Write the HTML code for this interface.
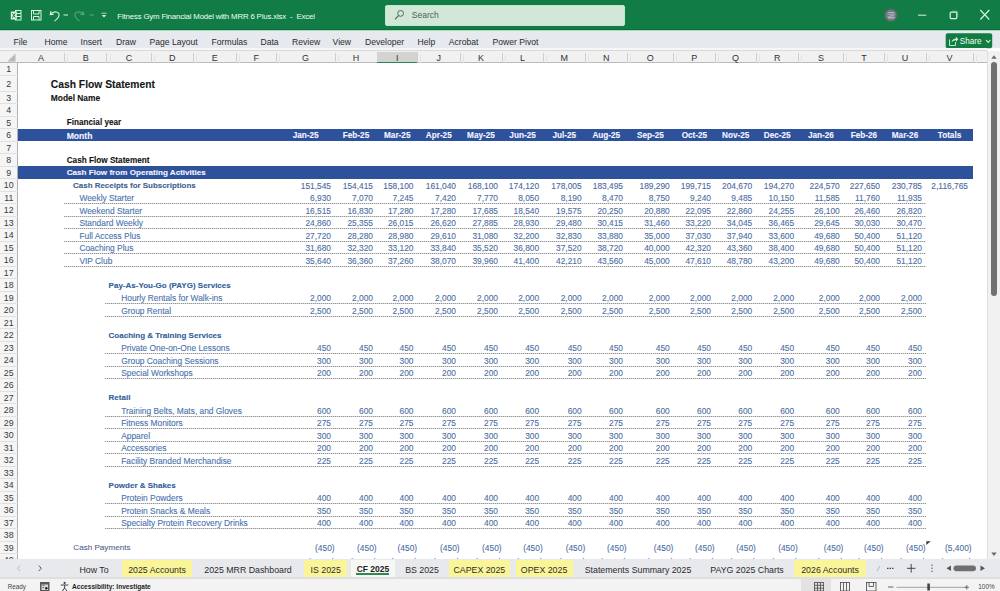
<!DOCTYPE html><html><head><meta charset="utf-8"><style>
*{margin:0;padding:0;box-sizing:border-box}
html,body{width:1000px;height:591px;overflow:hidden;background:#fff;font-family:"Liberation Sans",sans-serif}
.a{position:absolute;white-space:pre}
svg{position:absolute;overflow:visible}
#title{position:absolute;left:0;top:0;width:1000px;height:30px;background:#117c46}
#ribbon{position:absolute;left:0;top:30px;width:1000px;height:18.3px;background:#e6e9ed;border-top:1px solid #a8dcb8}
#colhdr{position:absolute;left:0;top:48.3px;width:987px;height:15px;background:#f1f1f1;border-bottom:1px solid #bababa;border-top:2.2px solid #f6f6f6}
#colhdr:after{content:'';position:absolute;left:0;top:0;width:100%;height:1px;background:#dadada}
#rowhdr{position:absolute;left:0;top:62.9px;width:17.8px;height:497px;background:#f5f5f5;border-right:1px solid #b0b0b0}
.rt{font-size:8.6px;color:#2b2b2b;}
.ch{font-size:9px;color:#333;text-align:center;line-height:12px;top:51.5px}
.rn{font-size:8.8px;color:#3a3a3a;text-align:center;width:17.5px;left:0}
.cell{font-size:8.4px;-webkit-text-stroke:0.1px currentColor}
.b{font-weight:bold}
.num{text-align:right}
.band{position:absolute;left:17.5px;width:955.5px;background:#2e519c}
.dot{position:absolute;height:1.2px;background:repeating-linear-gradient(90deg,#959595 0 1px,#d6d6d6 1px 2px)}
#tabs{position:absolute;left:0;top:559px;width:1000px;height:18.5px;background:#e8e9ec}
#status{position:absolute;left:0;top:577.3px;width:1000px;height:13.7px;background:#f3f3f3;border-top:2px solid #dfdfdf}
.tab{position:absolute;top:559.5px;height:17.5px;line-height:21px;font-size:8.8px;color:#2b2b2b;text-align:center}
.y{background:#fbf59a}
</style></head><body>
<div id="title"></div>
<div class="a" style="left:0;top:28.8px;width:1000px;height:1.2px;background:#0d6a3a"></div>
<svg style="left:0;top:0" width="1000" height="30" viewBox="0 0 1000 30">
<g fill="none" stroke="#d9f5e1" stroke-width="1">
<rect x="15.5" y="10.5" width="5.5" height="9.5"/>
<line x1="15.5" y1="13.5" x2="21" y2="13.5"/><line x1="15.5" y1="16.5" x2="21" y2="16.5"/>
</g>
<rect x="10.8" y="11.5" width="6" height="8" fill="#d9f5e1"/>
<path d="M12.3 13.2 L15.3 17.8 M15.3 13.2 L12.3 17.8" stroke="#117c46" stroke-width="1"/>
<g fill="none" stroke="#d9f5e1" stroke-width="1">
<rect x="31.5" y="10.5" width="9.5" height="9.5"/>
<path d="M33.5 10.5 V14 H39 V10.5 M33.5 20 V16.5 H39 V20"/>
</g>
<path d="M51 11 L50.2 14.6 L53.8 14.2" fill="none" stroke="#d9f5e1" stroke-width="1.1"/>
<path d="M50.5 14.3 C54 10.5 59.5 11.5 59 15.5 C58.8 17.5 56.5 19.5 54.5 21.2" fill="none" stroke="#d9f5e1" stroke-width="1.1"/>
<line x1="63.5" y1="15" x2="68" y2="15" stroke="#d9f5e1" stroke-width="1"/>
<g opacity="0.35">
<path d="M83 11 L83.8 14.6 L80.2 14.2" fill="none" stroke="#d9f5e1" stroke-width="1.1"/>
<path d="M83.5 14.3 C80 10.5 74.5 11.5 75 15.5 C75.2 17.5 77.5 19.5 79.5 21.2" fill="none" stroke="#d9f5e1" stroke-width="1.1"/>
<line x1="89.5" y1="15" x2="94" y2="15" stroke="#d9f5e1" stroke-width="1"/>
</g>
<line x1="101.5" y1="13.2" x2="106.5" y2="13.2" stroke="#d9f5e1" stroke-width="0.8"/>
<path d="M101.8 15 L106.2 15 L104 17.5 Z" fill="#d9f5e1"/>
<rect x="385.5" y="5.5" width="239" height="20" rx="1.5" fill="#d3e7d9" stroke="#b9edc8" stroke-width="1"/>
<circle cx="400.6" cy="13.4" r="2.9" fill="none" stroke="#4c6b57" stroke-width="1"/>
<line x1="398.5" y1="15.6" x2="395" y2="19.4" stroke="#4c6b57" stroke-width="1.1"/>
<circle cx="890.9" cy="15.2" r="6.4" fill="#6f7a80" stroke="#3f6d52" stroke-width="1.4"/><rect x="887.6" y="12" width="7" height="6.5" rx="1" fill="#aeb3bb"/>
<line x1="918" y1="15.2" x2="926.3" y2="15.2" stroke="#d9f5e1" stroke-width="1"/>
<rect x="950.2" y="12.2" width="6.6" height="6.4" rx="1" fill="none" stroke="#d9f5e1" stroke-width="1.2"/>
<path d="M952.2 11.2 H957.8 V16.8" fill="none" stroke="#d9f5e1" stroke-width="0.6" opacity="0.5"/>
<path d="M980.3 10 L989.3 19.5 M989.3 10 L980.3 19.5" stroke="#d9f5e1" stroke-width="1.1"/>
</svg>
<div class="a" style="left:887.2px;top:11.2px;font-size:5.5px;line-height:8px;color:#5d6670">RS</div>
<div class="a" style="left:117.3px;top:11.6px;font-size:7.8px;letter-spacing:-0.15px;color:#f0fff4;line-height:10px">Fitness Gym Financial Model with MRR 6 Plus.xlsx  -  Excel</div>
<div class="a" style="left:411.8px;top:10px;font-size:8.5px;color:#4d5e53;line-height:10px">Search</div>
<div id="ribbon"></div>
<div class="a rt" style="left:13.5px;top:37.4px;line-height:11px">File</div>
<div class="a rt" style="left:44.6px;top:37.4px;line-height:11px">Home</div>
<div class="a rt" style="left:80.5px;top:37.4px;line-height:11px">Insert</div>
<div class="a rt" style="left:116px;top:37.4px;line-height:11px">Draw</div>
<div class="a rt" style="left:149.5px;top:37.4px;line-height:11px">Page Layout</div>
<div class="a rt" style="left:211.6px;top:37.4px;line-height:11px">Formulas</div>
<div class="a rt" style="left:260.5px;top:37.4px;line-height:11px">Data</div>
<div class="a rt" style="left:292px;top:37.4px;line-height:11px">Review</div>
<div class="a rt" style="left:332.6px;top:37.4px;line-height:11px">View</div>
<div class="a rt" style="left:365px;top:37.4px;line-height:11px">Developer</div>
<div class="a rt" style="left:417.6px;top:37.4px;line-height:11px">Help</div>
<div class="a rt" style="left:448.8px;top:37.4px;line-height:11px">Acrobat</div>
<div class="a rt" style="left:492.6px;top:37.4px;line-height:11px">Power Pivot</div>
<svg style="left:0;top:0" width="1000" height="52" viewBox="0 0 1000 52">
<rect x="945.7" y="33.3" width="46.5" height="15" rx="2" fill="#137c42"/>
<path d="M949.5 39.5 V45.5 H955.5 V42" fill="none" stroke="#c9f3d6" stroke-width="0.9"/>
<path d="M951.5 42.5 C952 39.5 954 38.5 956 38.5 V36.8 L958.3 39.3 L956 41.8 V40.2 C954.5 40.2 952.8 41 951.5 42.5 Z" fill="#c9f3d6"/>
<path d="M986 40 L988.2 42.4 L990.4 40" fill="none" stroke="#d9f7e2" stroke-width="1.1"/>
</svg>
<div class="a" style="left:959.8px;top:35.6px;font-size:8.2px;color:#f0fff4;line-height:11px">Share</div>
<div id="colhdr"></div>
<svg style="left:0;top:0" width="20" height="64" viewBox="0 0 20 64"><path d="M15.5 53.5 V61.5 H7.5 Z" fill="#b9b9b9"/></svg>
<div class="a ch" style="left:17.5px;width:46.900000000000006px">A</div>
<div class="a" style="left:63.900000000000006px;top:53px;width:1px;height:9.9px;background:#cfcfcf"></div>
<div class="a" style="left:67.10000000000001px;top:55px;width:1px;height:7.9px;background:#e2e2e2"></div>
<div class="a ch" style="left:64.4px;width:42.5px">B</div>
<div class="a" style="left:106.4px;top:53px;width:1px;height:9.9px;background:#cfcfcf"></div>
<div class="a" style="left:109.60000000000001px;top:55px;width:1px;height:7.9px;background:#e2e2e2"></div>
<div class="a ch" style="left:106.9px;width:44.349999999999994px">C</div>
<div class="a" style="left:150.75px;top:53px;width:1px;height:9.9px;background:#cfcfcf"></div>
<div class="a" style="left:153.95px;top:55px;width:1px;height:7.9px;background:#e2e2e2"></div>
<div class="a ch" style="left:151.25px;width:41.849999999999994px">D</div>
<div class="a" style="left:192.6px;top:53px;width:1px;height:9.9px;background:#cfcfcf"></div>
<div class="a" style="left:195.79999999999998px;top:55px;width:1px;height:7.9px;background:#e2e2e2"></div>
<div class="a ch" style="left:193.1px;width:43.150000000000006px">E</div>
<div class="a" style="left:235.75px;top:53px;width:1px;height:9.9px;background:#cfcfcf"></div>
<div class="a" style="left:238.95px;top:55px;width:1px;height:7.9px;background:#e2e2e2"></div>
<div class="a ch" style="left:236.25px;width:40.0px">F</div>
<div class="a" style="left:275.75px;top:53px;width:1px;height:9.9px;background:#cfcfcf"></div>
<div class="a" style="left:278.95px;top:55px;width:1px;height:7.9px;background:#e2e2e2"></div>
<div class="a ch" style="left:276.25px;width:58.75px">G</div>
<div class="a" style="left:334.5px;top:53px;width:1px;height:9.9px;background:#cfcfcf"></div>
<div class="a" style="left:337.7px;top:55px;width:1px;height:7.9px;background:#e2e2e2"></div>
<div class="a ch" style="left:335px;width:42px">H</div>
<div class="a" style="left:376.5px;top:53px;width:1px;height:9.9px;background:#cfcfcf"></div>
<div class="a" style="left:379.7px;top:55px;width:1px;height:7.9px;background:#e2e2e2"></div>
<div class="a" style="left:377px;top:51.5px;width:40.5px;height:11.8px;background:#d3d3d3;border-bottom:1.2px solid #2f8352"></div>
<div class="a ch" style="left:377px;width:40.5px">I</div>
<div class="a" style="left:417.0px;top:53px;width:1px;height:9.9px;background:#cfcfcf"></div>
<div class="a" style="left:420.2px;top:55px;width:1px;height:7.9px;background:#e2e2e2"></div>
<div class="a ch" style="left:417.5px;width:42.5px">J</div>
<div class="a" style="left:459.5px;top:53px;width:1px;height:9.9px;background:#cfcfcf"></div>
<div class="a" style="left:462.7px;top:55px;width:1px;height:7.9px;background:#e2e2e2"></div>
<div class="a ch" style="left:460px;width:42px">K</div>
<div class="a" style="left:501.5px;top:53px;width:1px;height:9.9px;background:#cfcfcf"></div>
<div class="a" style="left:504.7px;top:55px;width:1px;height:7.9px;background:#e2e2e2"></div>
<div class="a ch" style="left:502px;width:41.10000000000002px">L</div>
<div class="a" style="left:542.6px;top:53px;width:1px;height:9.9px;background:#cfcfcf"></div>
<div class="a" style="left:545.8000000000001px;top:55px;width:1px;height:7.9px;background:#e2e2e2"></div>
<div class="a ch" style="left:543.1px;width:42.5px">M</div>
<div class="a" style="left:585.1px;top:53px;width:1px;height:9.9px;background:#cfcfcf"></div>
<div class="a" style="left:588.3000000000001px;top:55px;width:1px;height:7.9px;background:#e2e2e2"></div>
<div class="a ch" style="left:585.6px;width:41.39999999999998px">N</div>
<div class="a" style="left:626.5px;top:53px;width:1px;height:9.9px;background:#cfcfcf"></div>
<div class="a" style="left:629.7px;top:55px;width:1px;height:7.9px;background:#e2e2e2"></div>
<div class="a ch" style="left:627px;width:46.75px">O</div>
<div class="a" style="left:673.25px;top:53px;width:1px;height:9.9px;background:#cfcfcf"></div>
<div class="a" style="left:676.45px;top:55px;width:1px;height:7.9px;background:#e2e2e2"></div>
<div class="a ch" style="left:673.75px;width:41.25px">P</div>
<div class="a" style="left:714.5px;top:53px;width:1px;height:9.9px;background:#cfcfcf"></div>
<div class="a" style="left:717.7px;top:55px;width:1px;height:7.9px;background:#e2e2e2"></div>
<div class="a ch" style="left:715px;width:41.25px">Q</div>
<div class="a" style="left:755.75px;top:53px;width:1px;height:9.9px;background:#cfcfcf"></div>
<div class="a" style="left:758.95px;top:55px;width:1px;height:7.9px;background:#e2e2e2"></div>
<div class="a ch" style="left:756.25px;width:41.85000000000002px">R</div>
<div class="a" style="left:797.6px;top:53px;width:1px;height:9.9px;background:#cfcfcf"></div>
<div class="a" style="left:800.8000000000001px;top:55px;width:1px;height:7.9px;background:#e2e2e2"></div>
<div class="a ch" style="left:798.1px;width:45.64999999999998px">S</div>
<div class="a" style="left:843.25px;top:53px;width:1px;height:9.9px;background:#cfcfcf"></div>
<div class="a" style="left:846.45px;top:55px;width:1px;height:7.9px;background:#e2e2e2"></div>
<div class="a ch" style="left:843.75px;width:40.25px">T</div>
<div class="a" style="left:883.5px;top:53px;width:1px;height:9.9px;background:#cfcfcf"></div>
<div class="a" style="left:886.7px;top:55px;width:1px;height:7.9px;background:#e2e2e2"></div>
<div class="a ch" style="left:884px;width:42px">U</div>
<div class="a" style="left:925.5px;top:53px;width:1px;height:9.9px;background:#cfcfcf"></div>
<div class="a" style="left:928.7px;top:55px;width:1px;height:7.9px;background:#e2e2e2"></div>
<div class="a ch" style="left:926px;width:47px">V</div>
<div class="a" style="left:972.5px;top:53px;width:1px;height:9.9px;background:#cfcfcf"></div>
<div class="a" style="left:975.7px;top:55px;width:1px;height:7.9px;background:#e2e2e2"></div>
<div id="rowhdr"></div>
<div class="a rn" style="top:63.44px;height:12.500000000000007px;line-height:12.500000000000007px">1</div>
<div class="a" style="left:0;top:74.9px;width:17.5px;height:1px;background:#e0e0e0"></div>
<div class="a rn" style="top:75.94000000000001px;height:16.0px;line-height:16.0px">2</div>
<div class="a" style="left:0;top:90.9px;width:17.5px;height:1px;background:#e0e0e0"></div>
<div class="a rn" style="top:91.94000000000001px;height:12.5px;line-height:12.5px">3</div>
<div class="a" style="left:0;top:103.4px;width:17.5px;height:1px;background:#e0e0e0"></div>
<div class="a rn" style="top:104.44000000000001px;height:12.5px;line-height:12.5px">4</div>
<div class="a" style="left:0;top:115.9px;width:17.5px;height:1px;background:#e0e0e0"></div>
<div class="a rn" style="top:116.94000000000001px;height:12.5px;line-height:12.5px">5</div>
<div class="a" style="left:0;top:128.4px;width:17.5px;height:1px;background:#e0e0e0"></div>
<div class="a rn" style="top:129.44px;height:12.5px;line-height:12.5px">6</div>
<div class="a" style="left:0;top:140.9px;width:17.5px;height:1px;background:#e0e0e0"></div>
<div class="a rn" style="top:141.94px;height:12.5px;line-height:12.5px">7</div>
<div class="a" style="left:0;top:153.4px;width:17.5px;height:1px;background:#e0e0e0"></div>
<div class="a rn" style="top:154.44px;height:12.5px;line-height:12.5px">8</div>
<div class="a" style="left:0;top:165.9px;width:17.5px;height:1px;background:#e0e0e0"></div>
<div class="a rn" style="top:166.94px;height:12.5px;line-height:12.5px">9</div>
<div class="a" style="left:0;top:178.4px;width:17.5px;height:1px;background:#e0e0e0"></div>
<div class="a rn" style="top:179.44px;height:12.5px;line-height:12.5px">10</div>
<div class="a" style="left:0;top:190.9px;width:17.5px;height:1px;background:#e0e0e0"></div>
<div class="a rn" style="top:191.94px;height:12.5px;line-height:12.5px">11</div>
<div class="a" style="left:0;top:203.4px;width:17.5px;height:1px;background:#e0e0e0"></div>
<div class="a rn" style="top:204.44px;height:12.5px;line-height:12.5px">12</div>
<div class="a" style="left:0;top:215.9px;width:17.5px;height:1px;background:#e0e0e0"></div>
<div class="a rn" style="top:216.94px;height:12.5px;line-height:12.5px">13</div>
<div class="a" style="left:0;top:228.4px;width:17.5px;height:1px;background:#e0e0e0"></div>
<div class="a rn" style="top:229.44px;height:12.5px;line-height:12.5px">14</div>
<div class="a" style="left:0;top:240.9px;width:17.5px;height:1px;background:#e0e0e0"></div>
<div class="a rn" style="top:241.94px;height:12.5px;line-height:12.5px">15</div>
<div class="a" style="left:0;top:253.4px;width:17.5px;height:1px;background:#e0e0e0"></div>
<div class="a rn" style="top:254.44px;height:12.499999999999972px;line-height:12.499999999999972px">16</div>
<div class="a" style="left:0;top:265.9px;width:17.5px;height:1px;background:#e0e0e0"></div>
<div class="a rn" style="top:266.94px;height:12.5px;line-height:12.5px">17</div>
<div class="a" style="left:0;top:278.4px;width:17.5px;height:1px;background:#e0e0e0"></div>
<div class="a rn" style="top:279.44px;height:12.5px;line-height:12.5px">18</div>
<div class="a" style="left:0;top:290.9px;width:17.5px;height:1px;background:#e0e0e0"></div>
<div class="a rn" style="top:291.94px;height:12.5px;line-height:12.5px">19</div>
<div class="a" style="left:0;top:303.4px;width:17.5px;height:1px;background:#e0e0e0"></div>
<div class="a rn" style="top:304.44px;height:12.5px;line-height:12.5px">20</div>
<div class="a" style="left:0;top:315.9px;width:17.5px;height:1px;background:#e0e0e0"></div>
<div class="a rn" style="top:316.94px;height:12.5px;line-height:12.5px">21</div>
<div class="a" style="left:0;top:328.4px;width:17.5px;height:1px;background:#e0e0e0"></div>
<div class="a rn" style="top:329.44px;height:12.5px;line-height:12.5px">22</div>
<div class="a" style="left:0;top:340.9px;width:17.5px;height:1px;background:#e0e0e0"></div>
<div class="a rn" style="top:341.94px;height:12.5px;line-height:12.5px">23</div>
<div class="a" style="left:0;top:353.4px;width:17.5px;height:1px;background:#e0e0e0"></div>
<div class="a rn" style="top:354.44px;height:12.5px;line-height:12.5px">24</div>
<div class="a" style="left:0;top:365.9px;width:17.5px;height:1px;background:#e0e0e0"></div>
<div class="a rn" style="top:366.94px;height:12.5px;line-height:12.5px">25</div>
<div class="a" style="left:0;top:378.4px;width:17.5px;height:1px;background:#e0e0e0"></div>
<div class="a rn" style="top:379.44px;height:12.5px;line-height:12.5px">26</div>
<div class="a" style="left:0;top:390.9px;width:17.5px;height:1px;background:#e0e0e0"></div>
<div class="a rn" style="top:391.94px;height:12.5px;line-height:12.5px">27</div>
<div class="a" style="left:0;top:403.4px;width:17.5px;height:1px;background:#e0e0e0"></div>
<div class="a rn" style="top:404.44px;height:12.5px;line-height:12.5px">28</div>
<div class="a" style="left:0;top:415.9px;width:17.5px;height:1px;background:#e0e0e0"></div>
<div class="a rn" style="top:416.94px;height:12.5px;line-height:12.5px">29</div>
<div class="a" style="left:0;top:428.4px;width:17.5px;height:1px;background:#e0e0e0"></div>
<div class="a rn" style="top:429.44px;height:12.5px;line-height:12.5px">30</div>
<div class="a" style="left:0;top:440.9px;width:17.5px;height:1px;background:#e0e0e0"></div>
<div class="a rn" style="top:441.94px;height:12.5px;line-height:12.5px">31</div>
<div class="a" style="left:0;top:453.4px;width:17.5px;height:1px;background:#e0e0e0"></div>
<div class="a rn" style="top:454.44px;height:12.5px;line-height:12.5px">32</div>
<div class="a" style="left:0;top:465.9px;width:17.5px;height:1px;background:#e0e0e0"></div>
<div class="a rn" style="top:466.94px;height:12.5px;line-height:12.5px">33</div>
<div class="a" style="left:0;top:478.4px;width:17.5px;height:1px;background:#e0e0e0"></div>
<div class="a rn" style="top:479.44px;height:12.5px;line-height:12.5px">34</div>
<div class="a" style="left:0;top:490.9px;width:17.5px;height:1px;background:#e0e0e0"></div>
<div class="a rn" style="top:491.94px;height:12.5px;line-height:12.5px">35</div>
<div class="a" style="left:0;top:503.4px;width:17.5px;height:1px;background:#e0e0e0"></div>
<div class="a rn" style="top:504.44px;height:12.5px;line-height:12.5px">36</div>
<div class="a" style="left:0;top:515.9px;width:17.5px;height:1px;background:#e0e0e0"></div>
<div class="a rn" style="top:516.9399999999999px;height:12.5px;line-height:12.5px">37</div>
<div class="a" style="left:0;top:528.4px;width:17.5px;height:1px;background:#e0e0e0"></div>
<div class="a rn" style="top:529.4399999999999px;height:12.5px;line-height:12.5px">38</div>
<div class="a" style="left:0;top:540.9px;width:17.5px;height:1px;background:#e0e0e0"></div>
<div class="a rn" style="top:541.9399999999999px;height:12.5px;line-height:12.5px">39</div>
<div class="a" style="left:0;top:553.4px;width:17.5px;height:1px;background:#e0e0e0"></div>
<div class="a rn" style="top:554.4399999999999px;height:12.5px;line-height:12.5px">40</div>
<div class="a" style="left:0;top:565.9px;width:17.5px;height:1px;background:#e0e0e0"></div>
<div class="band" style="top:128.9px;height:12.5px"></div>
<div class="band" style="top:166.4px;height:12.5px"></div>
<div class="a cell b" style="left:50.8px;top:76.30000000000001px;height:16.0px;line-height:16.0px;color:#151515;font-size:10.3px;margin-top:0.8px;">Cash Flow Statement</div>
<div class="a cell b" style="left:50.8px;top:92.30000000000001px;height:12.5px;line-height:12.5px;color:#151515;font-size:8.4px;">Model Name</div>
<div class="a cell b" style="left:66.7px;top:117.30000000000001px;height:12.5px;line-height:12.5px;color:#151515;font-size:8.2px;">Financial year</div>
<div class="a cell b" style="left:66.7px;top:129.8px;height:12.5px;line-height:12.5px;color:#f4f6ff;font-size:8.6px;">Month</div>
<div class="a cell b" style="left:276.25px;width:58.75px;text-align:center;top:129.8px;height:12.5px;line-height:12.5px;color:#f4f6ff;font-size:8.2px;">Jan-25</div>
<div class="a cell b" style="left:335px;width:42px;text-align:center;top:129.8px;height:12.5px;line-height:12.5px;color:#f4f6ff;font-size:8.2px;">Feb-25</div>
<div class="a cell b" style="left:377px;width:40.5px;text-align:center;top:129.8px;height:12.5px;line-height:12.5px;color:#f4f6ff;font-size:8.2px;">Mar-25</div>
<div class="a cell b" style="left:417.5px;width:42.5px;text-align:center;top:129.8px;height:12.5px;line-height:12.5px;color:#f4f6ff;font-size:8.2px;">Apr-25</div>
<div class="a cell b" style="left:460px;width:42px;text-align:center;top:129.8px;height:12.5px;line-height:12.5px;color:#f4f6ff;font-size:8.2px;">May-25</div>
<div class="a cell b" style="left:502px;width:41.10000000000002px;text-align:center;top:129.8px;height:12.5px;line-height:12.5px;color:#f4f6ff;font-size:8.2px;">Jun-25</div>
<div class="a cell b" style="left:543.1px;width:42.5px;text-align:center;top:129.8px;height:12.5px;line-height:12.5px;color:#f4f6ff;font-size:8.2px;">Jul-25</div>
<div class="a cell b" style="left:585.6px;width:41.39999999999998px;text-align:center;top:129.8px;height:12.5px;line-height:12.5px;color:#f4f6ff;font-size:8.2px;">Aug-25</div>
<div class="a cell b" style="left:627px;width:46.75px;text-align:center;top:129.8px;height:12.5px;line-height:12.5px;color:#f4f6ff;font-size:8.2px;">Sep-25</div>
<div class="a cell b" style="left:673.75px;width:41.25px;text-align:center;top:129.8px;height:12.5px;line-height:12.5px;color:#f4f6ff;font-size:8.2px;">Oct-25</div>
<div class="a cell b" style="left:715px;width:41.25px;text-align:center;top:129.8px;height:12.5px;line-height:12.5px;color:#f4f6ff;font-size:8.2px;">Nov-25</div>
<div class="a cell b" style="left:756.25px;width:41.85000000000002px;text-align:center;top:129.8px;height:12.5px;line-height:12.5px;color:#f4f6ff;font-size:8.2px;">Dec-25</div>
<div class="a cell b" style="left:798.1px;width:45.64999999999998px;text-align:center;top:129.8px;height:12.5px;line-height:12.5px;color:#f4f6ff;font-size:8.2px;">Jan-26</div>
<div class="a cell b" style="left:843.75px;width:40.25px;text-align:center;top:129.8px;height:12.5px;line-height:12.5px;color:#f4f6ff;font-size:8.2px;">Feb-26</div>
<div class="a cell b" style="left:884px;width:42px;text-align:center;top:129.8px;height:12.5px;line-height:12.5px;color:#f4f6ff;font-size:8.2px;">Mar-26</div>
<div class="a cell b" style="left:926px;width:47px;text-align:center;top:129.8px;height:12.5px;line-height:12.5px;color:#f4f6ff;font-size:8.2px;">Totals</div>
<div class="a cell b" style="left:66.7px;top:154.8px;height:12.5px;line-height:12.5px;color:#151515;font-size:8.2px;">Cash Flow Statement</div>
<div class="a cell b" style="left:66.7px;top:167.3px;height:12.5px;line-height:12.5px;color:#f4f6ff;font-size:8.1px;">Cash Flow from Operating Activities</div>
<div class="a cell b" style="left:73.1px;top:179.8px;height:12.5px;line-height:12.5px;color:#40608f;font-size:7.95px;">Cash Receipts for Subscriptions</div>
<div class="a cell num " style="right:669px;top:179.8px;height:12.5px;line-height:12.5px;color:#4a6a9e">151,545</div>
<div class="a cell num " style="right:627px;top:179.8px;height:12.5px;line-height:12.5px;color:#4a6a9e">154,415</div>
<div class="a cell num " style="right:586.5px;top:179.8px;height:12.5px;line-height:12.5px;color:#4a6a9e">158,100</div>
<div class="a cell num " style="right:544px;top:179.8px;height:12.5px;line-height:12.5px;color:#4a6a9e">161,040</div>
<div class="a cell num " style="right:502px;top:179.8px;height:12.5px;line-height:12.5px;color:#4a6a9e">168,100</div>
<div class="a cell num " style="right:460.9px;top:179.8px;height:12.5px;line-height:12.5px;color:#4a6a9e">174,120</div>
<div class="a cell num " style="right:418.4px;top:179.8px;height:12.5px;line-height:12.5px;color:#4a6a9e">178,005</div>
<div class="a cell num " style="right:377px;top:179.8px;height:12.5px;line-height:12.5px;color:#4a6a9e">183,495</div>
<div class="a cell num " style="right:330.25px;top:179.8px;height:12.5px;line-height:12.5px;color:#4a6a9e">189,290</div>
<div class="a cell num " style="right:289px;top:179.8px;height:12.5px;line-height:12.5px;color:#4a6a9e">199,715</div>
<div class="a cell num " style="right:247.75px;top:179.8px;height:12.5px;line-height:12.5px;color:#4a6a9e">204,670</div>
<div class="a cell num " style="right:205.89999999999998px;top:179.8px;height:12.5px;line-height:12.5px;color:#4a6a9e">194,270</div>
<div class="a cell num " style="right:160.25px;top:179.8px;height:12.5px;line-height:12.5px;color:#4a6a9e">224,570</div>
<div class="a cell num " style="right:120px;top:179.8px;height:12.5px;line-height:12.5px;color:#4a6a9e">227,650</div>
<div class="a cell num " style="right:78px;top:179.8px;height:12.5px;line-height:12.5px;color:#4a6a9e">230,785</div>
<div class="a cell num " style="right:32px;top:179.8px;height:12.5px;line-height:12.5px;color:#4a6a9e">2,116,765</div>
<div class="a cell " style="left:79.4px;top:192.3px;height:12.5px;line-height:12.5px;color:#4872ae;font-size:8.4px;">Weekly Starter</div>
<div class="a cell num " style="right:669px;top:192.3px;height:12.5px;line-height:12.5px;color:#4d6fa3">6,930</div>
<div class="a cell num " style="right:627px;top:192.3px;height:12.5px;line-height:12.5px;color:#4d6fa3">7,070</div>
<div class="a cell num " style="right:586.5px;top:192.3px;height:12.5px;line-height:12.5px;color:#4d6fa3">7,245</div>
<div class="a cell num " style="right:544px;top:192.3px;height:12.5px;line-height:12.5px;color:#4d6fa3">7,420</div>
<div class="a cell num " style="right:502px;top:192.3px;height:12.5px;line-height:12.5px;color:#4d6fa3">7,770</div>
<div class="a cell num " style="right:460.9px;top:192.3px;height:12.5px;line-height:12.5px;color:#4d6fa3">8,050</div>
<div class="a cell num " style="right:418.4px;top:192.3px;height:12.5px;line-height:12.5px;color:#4d6fa3">8,190</div>
<div class="a cell num " style="right:377px;top:192.3px;height:12.5px;line-height:12.5px;color:#4d6fa3">8,470</div>
<div class="a cell num " style="right:330.25px;top:192.3px;height:12.5px;line-height:12.5px;color:#4d6fa3">8,750</div>
<div class="a cell num " style="right:289px;top:192.3px;height:12.5px;line-height:12.5px;color:#4d6fa3">9,240</div>
<div class="a cell num " style="right:247.75px;top:192.3px;height:12.5px;line-height:12.5px;color:#4d6fa3">9,485</div>
<div class="a cell num " style="right:205.89999999999998px;top:192.3px;height:12.5px;line-height:12.5px;color:#4d6fa3">10,150</div>
<div class="a cell num " style="right:160.25px;top:192.3px;height:12.5px;line-height:12.5px;color:#4d6fa3">11,585</div>
<div class="a cell num " style="right:120px;top:192.3px;height:12.5px;line-height:12.5px;color:#4d6fa3">11,760</div>
<div class="a cell num " style="right:78px;top:192.3px;height:12.5px;line-height:12.5px;color:#4d6fa3">11,935</div>
<div class="dot" style="left:64.4px;top:203.3px;width:861.6px"></div>
<div class="a cell " style="left:79.4px;top:204.8px;height:12.5px;line-height:12.5px;color:#4872ae;font-size:8.4px;">Weekend Starter</div>
<div class="a cell num " style="right:669px;top:204.8px;height:12.5px;line-height:12.5px;color:#4d6fa3">16,515</div>
<div class="a cell num " style="right:627px;top:204.8px;height:12.5px;line-height:12.5px;color:#4d6fa3">16,830</div>
<div class="a cell num " style="right:586.5px;top:204.8px;height:12.5px;line-height:12.5px;color:#4d6fa3">17,280</div>
<div class="a cell num " style="right:544px;top:204.8px;height:12.5px;line-height:12.5px;color:#4d6fa3">17,280</div>
<div class="a cell num " style="right:502px;top:204.8px;height:12.5px;line-height:12.5px;color:#4d6fa3">17,685</div>
<div class="a cell num " style="right:460.9px;top:204.8px;height:12.5px;line-height:12.5px;color:#4d6fa3">18,540</div>
<div class="a cell num " style="right:418.4px;top:204.8px;height:12.5px;line-height:12.5px;color:#4d6fa3">19,575</div>
<div class="a cell num " style="right:377px;top:204.8px;height:12.5px;line-height:12.5px;color:#4d6fa3">20,250</div>
<div class="a cell num " style="right:330.25px;top:204.8px;height:12.5px;line-height:12.5px;color:#4d6fa3">20,880</div>
<div class="a cell num " style="right:289px;top:204.8px;height:12.5px;line-height:12.5px;color:#4d6fa3">22,095</div>
<div class="a cell num " style="right:247.75px;top:204.8px;height:12.5px;line-height:12.5px;color:#4d6fa3">22,860</div>
<div class="a cell num " style="right:205.89999999999998px;top:204.8px;height:12.5px;line-height:12.5px;color:#4d6fa3">24,255</div>
<div class="a cell num " style="right:160.25px;top:204.8px;height:12.5px;line-height:12.5px;color:#4d6fa3">26,100</div>
<div class="a cell num " style="right:120px;top:204.8px;height:12.5px;line-height:12.5px;color:#4d6fa3">26,460</div>
<div class="a cell num " style="right:78px;top:204.8px;height:12.5px;line-height:12.5px;color:#4d6fa3">26,820</div>
<div class="dot" style="left:64.4px;top:215.8px;width:861.6px"></div>
<div class="a cell " style="left:79.4px;top:217.3px;height:12.5px;line-height:12.5px;color:#4872ae;font-size:8.4px;">Standard Weekly</div>
<div class="a cell num " style="right:669px;top:217.3px;height:12.5px;line-height:12.5px;color:#4d6fa3">24,860</div>
<div class="a cell num " style="right:627px;top:217.3px;height:12.5px;line-height:12.5px;color:#4d6fa3">25,355</div>
<div class="a cell num " style="right:586.5px;top:217.3px;height:12.5px;line-height:12.5px;color:#4d6fa3">26,015</div>
<div class="a cell num " style="right:544px;top:217.3px;height:12.5px;line-height:12.5px;color:#4d6fa3">26,620</div>
<div class="a cell num " style="right:502px;top:217.3px;height:12.5px;line-height:12.5px;color:#4d6fa3">27,885</div>
<div class="a cell num " style="right:460.9px;top:217.3px;height:12.5px;line-height:12.5px;color:#4d6fa3">28,930</div>
<div class="a cell num " style="right:418.4px;top:217.3px;height:12.5px;line-height:12.5px;color:#4d6fa3">29,480</div>
<div class="a cell num " style="right:377px;top:217.3px;height:12.5px;line-height:12.5px;color:#4d6fa3">30,415</div>
<div class="a cell num " style="right:330.25px;top:217.3px;height:12.5px;line-height:12.5px;color:#4d6fa3">31,460</div>
<div class="a cell num " style="right:289px;top:217.3px;height:12.5px;line-height:12.5px;color:#4d6fa3">33,220</div>
<div class="a cell num " style="right:247.75px;top:217.3px;height:12.5px;line-height:12.5px;color:#4d6fa3">34,045</div>
<div class="a cell num " style="right:205.89999999999998px;top:217.3px;height:12.5px;line-height:12.5px;color:#4d6fa3">36,465</div>
<div class="a cell num " style="right:160.25px;top:217.3px;height:12.5px;line-height:12.5px;color:#4d6fa3">29,645</div>
<div class="a cell num " style="right:120px;top:217.3px;height:12.5px;line-height:12.5px;color:#4d6fa3">30,030</div>
<div class="a cell num " style="right:78px;top:217.3px;height:12.5px;line-height:12.5px;color:#4d6fa3">30,470</div>
<div class="dot" style="left:64.4px;top:228.3px;width:861.6px"></div>
<div class="a cell " style="left:79.4px;top:229.8px;height:12.5px;line-height:12.5px;color:#4872ae;font-size:8.4px;">Full Access Plus</div>
<div class="a cell num " style="right:669px;top:229.8px;height:12.5px;line-height:12.5px;color:#4d6fa3">27,720</div>
<div class="a cell num " style="right:627px;top:229.8px;height:12.5px;line-height:12.5px;color:#4d6fa3">28,280</div>
<div class="a cell num " style="right:586.5px;top:229.8px;height:12.5px;line-height:12.5px;color:#4d6fa3">28,980</div>
<div class="a cell num " style="right:544px;top:229.8px;height:12.5px;line-height:12.5px;color:#4d6fa3">29,610</div>
<div class="a cell num " style="right:502px;top:229.8px;height:12.5px;line-height:12.5px;color:#4d6fa3">31,080</div>
<div class="a cell num " style="right:460.9px;top:229.8px;height:12.5px;line-height:12.5px;color:#4d6fa3">32,200</div>
<div class="a cell num " style="right:418.4px;top:229.8px;height:12.5px;line-height:12.5px;color:#4d6fa3">32,830</div>
<div class="a cell num " style="right:377px;top:229.8px;height:12.5px;line-height:12.5px;color:#4d6fa3">33,880</div>
<div class="a cell num " style="right:330.25px;top:229.8px;height:12.5px;line-height:12.5px;color:#4d6fa3">35,000</div>
<div class="a cell num " style="right:289px;top:229.8px;height:12.5px;line-height:12.5px;color:#4d6fa3">37,030</div>
<div class="a cell num " style="right:247.75px;top:229.8px;height:12.5px;line-height:12.5px;color:#4d6fa3">37,940</div>
<div class="a cell num " style="right:205.89999999999998px;top:229.8px;height:12.5px;line-height:12.5px;color:#4d6fa3">33,600</div>
<div class="a cell num " style="right:160.25px;top:229.8px;height:12.5px;line-height:12.5px;color:#4d6fa3">49,680</div>
<div class="a cell num " style="right:120px;top:229.8px;height:12.5px;line-height:12.5px;color:#4d6fa3">50,400</div>
<div class="a cell num " style="right:78px;top:229.8px;height:12.5px;line-height:12.5px;color:#4d6fa3">51,120</div>
<div class="dot" style="left:64.4px;top:240.8px;width:861.6px"></div>
<div class="a cell " style="left:79.4px;top:242.3px;height:12.5px;line-height:12.5px;color:#4872ae;font-size:8.4px;">Coaching Plus</div>
<div class="a cell num " style="right:669px;top:242.3px;height:12.5px;line-height:12.5px;color:#4d6fa3">31,680</div>
<div class="a cell num " style="right:627px;top:242.3px;height:12.5px;line-height:12.5px;color:#4d6fa3">32,320</div>
<div class="a cell num " style="right:586.5px;top:242.3px;height:12.5px;line-height:12.5px;color:#4d6fa3">33,120</div>
<div class="a cell num " style="right:544px;top:242.3px;height:12.5px;line-height:12.5px;color:#4d6fa3">33,840</div>
<div class="a cell num " style="right:502px;top:242.3px;height:12.5px;line-height:12.5px;color:#4d6fa3">35,520</div>
<div class="a cell num " style="right:460.9px;top:242.3px;height:12.5px;line-height:12.5px;color:#4d6fa3">36,800</div>
<div class="a cell num " style="right:418.4px;top:242.3px;height:12.5px;line-height:12.5px;color:#4d6fa3">37,520</div>
<div class="a cell num " style="right:377px;top:242.3px;height:12.5px;line-height:12.5px;color:#4d6fa3">38,720</div>
<div class="a cell num " style="right:330.25px;top:242.3px;height:12.5px;line-height:12.5px;color:#4d6fa3">40,000</div>
<div class="a cell num " style="right:289px;top:242.3px;height:12.5px;line-height:12.5px;color:#4d6fa3">42,320</div>
<div class="a cell num " style="right:247.75px;top:242.3px;height:12.5px;line-height:12.5px;color:#4d6fa3">43,360</div>
<div class="a cell num " style="right:205.89999999999998px;top:242.3px;height:12.5px;line-height:12.5px;color:#4d6fa3">38,400</div>
<div class="a cell num " style="right:160.25px;top:242.3px;height:12.5px;line-height:12.5px;color:#4d6fa3">49,680</div>
<div class="a cell num " style="right:120px;top:242.3px;height:12.5px;line-height:12.5px;color:#4d6fa3">50,400</div>
<div class="a cell num " style="right:78px;top:242.3px;height:12.5px;line-height:12.5px;color:#4d6fa3">51,120</div>
<div class="dot" style="left:64.4px;top:253.3px;width:861.6px"></div>
<div class="a cell " style="left:79.4px;top:254.8px;height:12.499999999999972px;line-height:12.499999999999972px;color:#4872ae;font-size:8.4px;">VIP Club</div>
<div class="a cell num " style="right:669px;top:254.8px;height:12.499999999999972px;line-height:12.499999999999972px;color:#4d6fa3">35,640</div>
<div class="a cell num " style="right:627px;top:254.8px;height:12.499999999999972px;line-height:12.499999999999972px;color:#4d6fa3">36,360</div>
<div class="a cell num " style="right:586.5px;top:254.8px;height:12.499999999999972px;line-height:12.499999999999972px;color:#4d6fa3">37,260</div>
<div class="a cell num " style="right:544px;top:254.8px;height:12.499999999999972px;line-height:12.499999999999972px;color:#4d6fa3">38,070</div>
<div class="a cell num " style="right:502px;top:254.8px;height:12.499999999999972px;line-height:12.499999999999972px;color:#4d6fa3">39,960</div>
<div class="a cell num " style="right:460.9px;top:254.8px;height:12.499999999999972px;line-height:12.499999999999972px;color:#4d6fa3">41,400</div>
<div class="a cell num " style="right:418.4px;top:254.8px;height:12.499999999999972px;line-height:12.499999999999972px;color:#4d6fa3">42,210</div>
<div class="a cell num " style="right:377px;top:254.8px;height:12.499999999999972px;line-height:12.499999999999972px;color:#4d6fa3">43,560</div>
<div class="a cell num " style="right:330.25px;top:254.8px;height:12.499999999999972px;line-height:12.499999999999972px;color:#4d6fa3">45,000</div>
<div class="a cell num " style="right:289px;top:254.8px;height:12.499999999999972px;line-height:12.499999999999972px;color:#4d6fa3">47,610</div>
<div class="a cell num " style="right:247.75px;top:254.8px;height:12.499999999999972px;line-height:12.499999999999972px;color:#4d6fa3">48,780</div>
<div class="a cell num " style="right:205.89999999999998px;top:254.8px;height:12.499999999999972px;line-height:12.499999999999972px;color:#4d6fa3">43,200</div>
<div class="a cell num " style="right:160.25px;top:254.8px;height:12.499999999999972px;line-height:12.499999999999972px;color:#4d6fa3">49,680</div>
<div class="a cell num " style="right:120px;top:254.8px;height:12.499999999999972px;line-height:12.499999999999972px;color:#4d6fa3">50,400</div>
<div class="a cell num " style="right:78px;top:254.8px;height:12.499999999999972px;line-height:12.499999999999972px;color:#4d6fa3">51,120</div>
<div class="dot" style="left:64.4px;top:265.79999999999995px;width:861.6px"></div>
<div class="a cell b" style="left:108.6px;top:279.79999999999995px;height:12.5px;line-height:12.5px;color:#2f5e9a;font-size:8.0px;">Pay-As-You-Go (PAYG) Services</div>
<div class="a cell " style="left:121.2px;top:292.29999999999995px;height:12.5px;line-height:12.5px;color:#4872ae;font-size:8.4px;">Hourly Rentals for Walk-ins</div>
<div class="a cell num " style="right:669px;top:292.29999999999995px;height:12.5px;line-height:12.5px;color:#4d6fa3">2,000</div>
<div class="a cell num " style="right:627px;top:292.29999999999995px;height:12.5px;line-height:12.5px;color:#4d6fa3">2,000</div>
<div class="a cell num " style="right:586.5px;top:292.29999999999995px;height:12.5px;line-height:12.5px;color:#4d6fa3">2,000</div>
<div class="a cell num " style="right:544px;top:292.29999999999995px;height:12.5px;line-height:12.5px;color:#4d6fa3">2,000</div>
<div class="a cell num " style="right:502px;top:292.29999999999995px;height:12.5px;line-height:12.5px;color:#4d6fa3">2,000</div>
<div class="a cell num " style="right:460.9px;top:292.29999999999995px;height:12.5px;line-height:12.5px;color:#4d6fa3">2,000</div>
<div class="a cell num " style="right:418.4px;top:292.29999999999995px;height:12.5px;line-height:12.5px;color:#4d6fa3">2,000</div>
<div class="a cell num " style="right:377px;top:292.29999999999995px;height:12.5px;line-height:12.5px;color:#4d6fa3">2,000</div>
<div class="a cell num " style="right:330.25px;top:292.29999999999995px;height:12.5px;line-height:12.5px;color:#4d6fa3">2,000</div>
<div class="a cell num " style="right:289px;top:292.29999999999995px;height:12.5px;line-height:12.5px;color:#4d6fa3">2,000</div>
<div class="a cell num " style="right:247.75px;top:292.29999999999995px;height:12.5px;line-height:12.5px;color:#4d6fa3">2,000</div>
<div class="a cell num " style="right:205.89999999999998px;top:292.29999999999995px;height:12.5px;line-height:12.5px;color:#4d6fa3">2,000</div>
<div class="a cell num " style="right:160.25px;top:292.29999999999995px;height:12.5px;line-height:12.5px;color:#4d6fa3">2,000</div>
<div class="a cell num " style="right:120px;top:292.29999999999995px;height:12.5px;line-height:12.5px;color:#4d6fa3">2,000</div>
<div class="a cell num " style="right:78px;top:292.29999999999995px;height:12.5px;line-height:12.5px;color:#4d6fa3">2,000</div>
<div class="dot" style="left:104.5px;top:303.29999999999995px;width:821.5px"></div>
<div class="a cell " style="left:121.2px;top:304.79999999999995px;height:12.5px;line-height:12.5px;color:#4872ae;font-size:8.4px;">Group Rental</div>
<div class="a cell num " style="right:669px;top:304.79999999999995px;height:12.5px;line-height:12.5px;color:#4d6fa3">2,500</div>
<div class="a cell num " style="right:627px;top:304.79999999999995px;height:12.5px;line-height:12.5px;color:#4d6fa3">2,500</div>
<div class="a cell num " style="right:586.5px;top:304.79999999999995px;height:12.5px;line-height:12.5px;color:#4d6fa3">2,500</div>
<div class="a cell num " style="right:544px;top:304.79999999999995px;height:12.5px;line-height:12.5px;color:#4d6fa3">2,500</div>
<div class="a cell num " style="right:502px;top:304.79999999999995px;height:12.5px;line-height:12.5px;color:#4d6fa3">2,500</div>
<div class="a cell num " style="right:460.9px;top:304.79999999999995px;height:12.5px;line-height:12.5px;color:#4d6fa3">2,500</div>
<div class="a cell num " style="right:418.4px;top:304.79999999999995px;height:12.5px;line-height:12.5px;color:#4d6fa3">2,500</div>
<div class="a cell num " style="right:377px;top:304.79999999999995px;height:12.5px;line-height:12.5px;color:#4d6fa3">2,500</div>
<div class="a cell num " style="right:330.25px;top:304.79999999999995px;height:12.5px;line-height:12.5px;color:#4d6fa3">2,500</div>
<div class="a cell num " style="right:289px;top:304.79999999999995px;height:12.5px;line-height:12.5px;color:#4d6fa3">2,500</div>
<div class="a cell num " style="right:247.75px;top:304.79999999999995px;height:12.5px;line-height:12.5px;color:#4d6fa3">2,500</div>
<div class="a cell num " style="right:205.89999999999998px;top:304.79999999999995px;height:12.5px;line-height:12.5px;color:#4d6fa3">2,500</div>
<div class="a cell num " style="right:160.25px;top:304.79999999999995px;height:12.5px;line-height:12.5px;color:#4d6fa3">2,500</div>
<div class="a cell num " style="right:120px;top:304.79999999999995px;height:12.5px;line-height:12.5px;color:#4d6fa3">2,500</div>
<div class="a cell num " style="right:78px;top:304.79999999999995px;height:12.5px;line-height:12.5px;color:#4d6fa3">2,500</div>
<div class="dot" style="left:104.5px;top:315.79999999999995px;width:821.5px"></div>
<div class="a cell b" style="left:108.6px;top:329.79999999999995px;height:12.5px;line-height:12.5px;color:#2f5e9a;font-size:8.0px;">Coaching &amp; Training Services</div>
<div class="a cell " style="left:121.2px;top:342.29999999999995px;height:12.5px;line-height:12.5px;color:#4872ae;font-size:8.4px;">Private One-on-One Lessons</div>
<div class="a cell num " style="right:669px;top:342.29999999999995px;height:12.5px;line-height:12.5px;color:#4d6fa3">450</div>
<div class="a cell num " style="right:627px;top:342.29999999999995px;height:12.5px;line-height:12.5px;color:#4d6fa3">450</div>
<div class="a cell num " style="right:586.5px;top:342.29999999999995px;height:12.5px;line-height:12.5px;color:#4d6fa3">450</div>
<div class="a cell num " style="right:544px;top:342.29999999999995px;height:12.5px;line-height:12.5px;color:#4d6fa3">450</div>
<div class="a cell num " style="right:502px;top:342.29999999999995px;height:12.5px;line-height:12.5px;color:#4d6fa3">450</div>
<div class="a cell num " style="right:460.9px;top:342.29999999999995px;height:12.5px;line-height:12.5px;color:#4d6fa3">450</div>
<div class="a cell num " style="right:418.4px;top:342.29999999999995px;height:12.5px;line-height:12.5px;color:#4d6fa3">450</div>
<div class="a cell num " style="right:377px;top:342.29999999999995px;height:12.5px;line-height:12.5px;color:#4d6fa3">450</div>
<div class="a cell num " style="right:330.25px;top:342.29999999999995px;height:12.5px;line-height:12.5px;color:#4d6fa3">450</div>
<div class="a cell num " style="right:289px;top:342.29999999999995px;height:12.5px;line-height:12.5px;color:#4d6fa3">450</div>
<div class="a cell num " style="right:247.75px;top:342.29999999999995px;height:12.5px;line-height:12.5px;color:#4d6fa3">450</div>
<div class="a cell num " style="right:205.89999999999998px;top:342.29999999999995px;height:12.5px;line-height:12.5px;color:#4d6fa3">450</div>
<div class="a cell num " style="right:160.25px;top:342.29999999999995px;height:12.5px;line-height:12.5px;color:#4d6fa3">450</div>
<div class="a cell num " style="right:120px;top:342.29999999999995px;height:12.5px;line-height:12.5px;color:#4d6fa3">450</div>
<div class="a cell num " style="right:78px;top:342.29999999999995px;height:12.5px;line-height:12.5px;color:#4d6fa3">450</div>
<div class="dot" style="left:104.5px;top:353.29999999999995px;width:821.5px"></div>
<div class="a cell " style="left:121.2px;top:354.79999999999995px;height:12.5px;line-height:12.5px;color:#4872ae;font-size:8.4px;">Group Coaching Sessions</div>
<div class="a cell num " style="right:669px;top:354.79999999999995px;height:12.5px;line-height:12.5px;color:#4d6fa3">300</div>
<div class="a cell num " style="right:627px;top:354.79999999999995px;height:12.5px;line-height:12.5px;color:#4d6fa3">300</div>
<div class="a cell num " style="right:586.5px;top:354.79999999999995px;height:12.5px;line-height:12.5px;color:#4d6fa3">300</div>
<div class="a cell num " style="right:544px;top:354.79999999999995px;height:12.5px;line-height:12.5px;color:#4d6fa3">300</div>
<div class="a cell num " style="right:502px;top:354.79999999999995px;height:12.5px;line-height:12.5px;color:#4d6fa3">300</div>
<div class="a cell num " style="right:460.9px;top:354.79999999999995px;height:12.5px;line-height:12.5px;color:#4d6fa3">300</div>
<div class="a cell num " style="right:418.4px;top:354.79999999999995px;height:12.5px;line-height:12.5px;color:#4d6fa3">300</div>
<div class="a cell num " style="right:377px;top:354.79999999999995px;height:12.5px;line-height:12.5px;color:#4d6fa3">300</div>
<div class="a cell num " style="right:330.25px;top:354.79999999999995px;height:12.5px;line-height:12.5px;color:#4d6fa3">300</div>
<div class="a cell num " style="right:289px;top:354.79999999999995px;height:12.5px;line-height:12.5px;color:#4d6fa3">300</div>
<div class="a cell num " style="right:247.75px;top:354.79999999999995px;height:12.5px;line-height:12.5px;color:#4d6fa3">300</div>
<div class="a cell num " style="right:205.89999999999998px;top:354.79999999999995px;height:12.5px;line-height:12.5px;color:#4d6fa3">300</div>
<div class="a cell num " style="right:160.25px;top:354.79999999999995px;height:12.5px;line-height:12.5px;color:#4d6fa3">300</div>
<div class="a cell num " style="right:120px;top:354.79999999999995px;height:12.5px;line-height:12.5px;color:#4d6fa3">300</div>
<div class="a cell num " style="right:78px;top:354.79999999999995px;height:12.5px;line-height:12.5px;color:#4d6fa3">300</div>
<div class="dot" style="left:104.5px;top:365.79999999999995px;width:821.5px"></div>
<div class="a cell " style="left:121.2px;top:367.29999999999995px;height:12.5px;line-height:12.5px;color:#4872ae;font-size:8.4px;">Special Workshops</div>
<div class="a cell num " style="right:669px;top:367.29999999999995px;height:12.5px;line-height:12.5px;color:#4d6fa3">200</div>
<div class="a cell num " style="right:627px;top:367.29999999999995px;height:12.5px;line-height:12.5px;color:#4d6fa3">200</div>
<div class="a cell num " style="right:586.5px;top:367.29999999999995px;height:12.5px;line-height:12.5px;color:#4d6fa3">200</div>
<div class="a cell num " style="right:544px;top:367.29999999999995px;height:12.5px;line-height:12.5px;color:#4d6fa3">200</div>
<div class="a cell num " style="right:502px;top:367.29999999999995px;height:12.5px;line-height:12.5px;color:#4d6fa3">200</div>
<div class="a cell num " style="right:460.9px;top:367.29999999999995px;height:12.5px;line-height:12.5px;color:#4d6fa3">200</div>
<div class="a cell num " style="right:418.4px;top:367.29999999999995px;height:12.5px;line-height:12.5px;color:#4d6fa3">200</div>
<div class="a cell num " style="right:377px;top:367.29999999999995px;height:12.5px;line-height:12.5px;color:#4d6fa3">200</div>
<div class="a cell num " style="right:330.25px;top:367.29999999999995px;height:12.5px;line-height:12.5px;color:#4d6fa3">200</div>
<div class="a cell num " style="right:289px;top:367.29999999999995px;height:12.5px;line-height:12.5px;color:#4d6fa3">200</div>
<div class="a cell num " style="right:247.75px;top:367.29999999999995px;height:12.5px;line-height:12.5px;color:#4d6fa3">200</div>
<div class="a cell num " style="right:205.89999999999998px;top:367.29999999999995px;height:12.5px;line-height:12.5px;color:#4d6fa3">200</div>
<div class="a cell num " style="right:160.25px;top:367.29999999999995px;height:12.5px;line-height:12.5px;color:#4d6fa3">200</div>
<div class="a cell num " style="right:120px;top:367.29999999999995px;height:12.5px;line-height:12.5px;color:#4d6fa3">200</div>
<div class="a cell num " style="right:78px;top:367.29999999999995px;height:12.5px;line-height:12.5px;color:#4d6fa3">200</div>
<div class="dot" style="left:104.5px;top:378.29999999999995px;width:821.5px"></div>
<div class="a cell b" style="left:108.6px;top:392.29999999999995px;height:12.5px;line-height:12.5px;color:#2f5e9a;font-size:8.0px;">Retail</div>
<div class="a cell " style="left:121.2px;top:404.79999999999995px;height:12.5px;line-height:12.5px;color:#4872ae;font-size:8.4px;">Training Belts, Mats, and Gloves</div>
<div class="a cell num " style="right:669px;top:404.79999999999995px;height:12.5px;line-height:12.5px;color:#4d6fa3">600</div>
<div class="a cell num " style="right:627px;top:404.79999999999995px;height:12.5px;line-height:12.5px;color:#4d6fa3">600</div>
<div class="a cell num " style="right:586.5px;top:404.79999999999995px;height:12.5px;line-height:12.5px;color:#4d6fa3">600</div>
<div class="a cell num " style="right:544px;top:404.79999999999995px;height:12.5px;line-height:12.5px;color:#4d6fa3">600</div>
<div class="a cell num " style="right:502px;top:404.79999999999995px;height:12.5px;line-height:12.5px;color:#4d6fa3">600</div>
<div class="a cell num " style="right:460.9px;top:404.79999999999995px;height:12.5px;line-height:12.5px;color:#4d6fa3">600</div>
<div class="a cell num " style="right:418.4px;top:404.79999999999995px;height:12.5px;line-height:12.5px;color:#4d6fa3">600</div>
<div class="a cell num " style="right:377px;top:404.79999999999995px;height:12.5px;line-height:12.5px;color:#4d6fa3">600</div>
<div class="a cell num " style="right:330.25px;top:404.79999999999995px;height:12.5px;line-height:12.5px;color:#4d6fa3">600</div>
<div class="a cell num " style="right:289px;top:404.79999999999995px;height:12.5px;line-height:12.5px;color:#4d6fa3">600</div>
<div class="a cell num " style="right:247.75px;top:404.79999999999995px;height:12.5px;line-height:12.5px;color:#4d6fa3">600</div>
<div class="a cell num " style="right:205.89999999999998px;top:404.79999999999995px;height:12.5px;line-height:12.5px;color:#4d6fa3">600</div>
<div class="a cell num " style="right:160.25px;top:404.79999999999995px;height:12.5px;line-height:12.5px;color:#4d6fa3">600</div>
<div class="a cell num " style="right:120px;top:404.79999999999995px;height:12.5px;line-height:12.5px;color:#4d6fa3">600</div>
<div class="a cell num " style="right:78px;top:404.79999999999995px;height:12.5px;line-height:12.5px;color:#4d6fa3">600</div>
<div class="dot" style="left:104.5px;top:415.79999999999995px;width:821.5px"></div>
<div class="a cell " style="left:121.2px;top:417.29999999999995px;height:12.5px;line-height:12.5px;color:#4872ae;font-size:8.4px;">Fitness Monitors</div>
<div class="a cell num " style="right:669px;top:417.29999999999995px;height:12.5px;line-height:12.5px;color:#4d6fa3">275</div>
<div class="a cell num " style="right:627px;top:417.29999999999995px;height:12.5px;line-height:12.5px;color:#4d6fa3">275</div>
<div class="a cell num " style="right:586.5px;top:417.29999999999995px;height:12.5px;line-height:12.5px;color:#4d6fa3">275</div>
<div class="a cell num " style="right:544px;top:417.29999999999995px;height:12.5px;line-height:12.5px;color:#4d6fa3">275</div>
<div class="a cell num " style="right:502px;top:417.29999999999995px;height:12.5px;line-height:12.5px;color:#4d6fa3">275</div>
<div class="a cell num " style="right:460.9px;top:417.29999999999995px;height:12.5px;line-height:12.5px;color:#4d6fa3">275</div>
<div class="a cell num " style="right:418.4px;top:417.29999999999995px;height:12.5px;line-height:12.5px;color:#4d6fa3">275</div>
<div class="a cell num " style="right:377px;top:417.29999999999995px;height:12.5px;line-height:12.5px;color:#4d6fa3">275</div>
<div class="a cell num " style="right:330.25px;top:417.29999999999995px;height:12.5px;line-height:12.5px;color:#4d6fa3">275</div>
<div class="a cell num " style="right:289px;top:417.29999999999995px;height:12.5px;line-height:12.5px;color:#4d6fa3">275</div>
<div class="a cell num " style="right:247.75px;top:417.29999999999995px;height:12.5px;line-height:12.5px;color:#4d6fa3">275</div>
<div class="a cell num " style="right:205.89999999999998px;top:417.29999999999995px;height:12.5px;line-height:12.5px;color:#4d6fa3">275</div>
<div class="a cell num " style="right:160.25px;top:417.29999999999995px;height:12.5px;line-height:12.5px;color:#4d6fa3">275</div>
<div class="a cell num " style="right:120px;top:417.29999999999995px;height:12.5px;line-height:12.5px;color:#4d6fa3">275</div>
<div class="a cell num " style="right:78px;top:417.29999999999995px;height:12.5px;line-height:12.5px;color:#4d6fa3">275</div>
<div class="dot" style="left:104.5px;top:428.29999999999995px;width:821.5px"></div>
<div class="a cell " style="left:121.2px;top:429.79999999999995px;height:12.5px;line-height:12.5px;color:#4872ae;font-size:8.4px;">Apparel</div>
<div class="a cell num " style="right:669px;top:429.79999999999995px;height:12.5px;line-height:12.5px;color:#4d6fa3">300</div>
<div class="a cell num " style="right:627px;top:429.79999999999995px;height:12.5px;line-height:12.5px;color:#4d6fa3">300</div>
<div class="a cell num " style="right:586.5px;top:429.79999999999995px;height:12.5px;line-height:12.5px;color:#4d6fa3">300</div>
<div class="a cell num " style="right:544px;top:429.79999999999995px;height:12.5px;line-height:12.5px;color:#4d6fa3">300</div>
<div class="a cell num " style="right:502px;top:429.79999999999995px;height:12.5px;line-height:12.5px;color:#4d6fa3">300</div>
<div class="a cell num " style="right:460.9px;top:429.79999999999995px;height:12.5px;line-height:12.5px;color:#4d6fa3">300</div>
<div class="a cell num " style="right:418.4px;top:429.79999999999995px;height:12.5px;line-height:12.5px;color:#4d6fa3">300</div>
<div class="a cell num " style="right:377px;top:429.79999999999995px;height:12.5px;line-height:12.5px;color:#4d6fa3">300</div>
<div class="a cell num " style="right:330.25px;top:429.79999999999995px;height:12.5px;line-height:12.5px;color:#4d6fa3">300</div>
<div class="a cell num " style="right:289px;top:429.79999999999995px;height:12.5px;line-height:12.5px;color:#4d6fa3">300</div>
<div class="a cell num " style="right:247.75px;top:429.79999999999995px;height:12.5px;line-height:12.5px;color:#4d6fa3">300</div>
<div class="a cell num " style="right:205.89999999999998px;top:429.79999999999995px;height:12.5px;line-height:12.5px;color:#4d6fa3">300</div>
<div class="a cell num " style="right:160.25px;top:429.79999999999995px;height:12.5px;line-height:12.5px;color:#4d6fa3">300</div>
<div class="a cell num " style="right:120px;top:429.79999999999995px;height:12.5px;line-height:12.5px;color:#4d6fa3">300</div>
<div class="a cell num " style="right:78px;top:429.79999999999995px;height:12.5px;line-height:12.5px;color:#4d6fa3">300</div>
<div class="dot" style="left:104.5px;top:440.79999999999995px;width:821.5px"></div>
<div class="a cell " style="left:121.2px;top:442.29999999999995px;height:12.5px;line-height:12.5px;color:#4872ae;font-size:8.4px;">Accessories</div>
<div class="a cell num " style="right:669px;top:442.29999999999995px;height:12.5px;line-height:12.5px;color:#4d6fa3">200</div>
<div class="a cell num " style="right:627px;top:442.29999999999995px;height:12.5px;line-height:12.5px;color:#4d6fa3">200</div>
<div class="a cell num " style="right:586.5px;top:442.29999999999995px;height:12.5px;line-height:12.5px;color:#4d6fa3">200</div>
<div class="a cell num " style="right:544px;top:442.29999999999995px;height:12.5px;line-height:12.5px;color:#4d6fa3">200</div>
<div class="a cell num " style="right:502px;top:442.29999999999995px;height:12.5px;line-height:12.5px;color:#4d6fa3">200</div>
<div class="a cell num " style="right:460.9px;top:442.29999999999995px;height:12.5px;line-height:12.5px;color:#4d6fa3">200</div>
<div class="a cell num " style="right:418.4px;top:442.29999999999995px;height:12.5px;line-height:12.5px;color:#4d6fa3">200</div>
<div class="a cell num " style="right:377px;top:442.29999999999995px;height:12.5px;line-height:12.5px;color:#4d6fa3">200</div>
<div class="a cell num " style="right:330.25px;top:442.29999999999995px;height:12.5px;line-height:12.5px;color:#4d6fa3">200</div>
<div class="a cell num " style="right:289px;top:442.29999999999995px;height:12.5px;line-height:12.5px;color:#4d6fa3">200</div>
<div class="a cell num " style="right:247.75px;top:442.29999999999995px;height:12.5px;line-height:12.5px;color:#4d6fa3">200</div>
<div class="a cell num " style="right:205.89999999999998px;top:442.29999999999995px;height:12.5px;line-height:12.5px;color:#4d6fa3">200</div>
<div class="a cell num " style="right:160.25px;top:442.29999999999995px;height:12.5px;line-height:12.5px;color:#4d6fa3">200</div>
<div class="a cell num " style="right:120px;top:442.29999999999995px;height:12.5px;line-height:12.5px;color:#4d6fa3">200</div>
<div class="a cell num " style="right:78px;top:442.29999999999995px;height:12.5px;line-height:12.5px;color:#4d6fa3">200</div>
<div class="dot" style="left:104.5px;top:453.29999999999995px;width:821.5px"></div>
<div class="a cell " style="left:121.2px;top:454.79999999999995px;height:12.5px;line-height:12.5px;color:#4872ae;font-size:8.4px;">Facility Branded Merchandise</div>
<div class="a cell num " style="right:669px;top:454.79999999999995px;height:12.5px;line-height:12.5px;color:#4d6fa3">225</div>
<div class="a cell num " style="right:627px;top:454.79999999999995px;height:12.5px;line-height:12.5px;color:#4d6fa3">225</div>
<div class="a cell num " style="right:586.5px;top:454.79999999999995px;height:12.5px;line-height:12.5px;color:#4d6fa3">225</div>
<div class="a cell num " style="right:544px;top:454.79999999999995px;height:12.5px;line-height:12.5px;color:#4d6fa3">225</div>
<div class="a cell num " style="right:502px;top:454.79999999999995px;height:12.5px;line-height:12.5px;color:#4d6fa3">225</div>
<div class="a cell num " style="right:460.9px;top:454.79999999999995px;height:12.5px;line-height:12.5px;color:#4d6fa3">225</div>
<div class="a cell num " style="right:418.4px;top:454.79999999999995px;height:12.5px;line-height:12.5px;color:#4d6fa3">225</div>
<div class="a cell num " style="right:377px;top:454.79999999999995px;height:12.5px;line-height:12.5px;color:#4d6fa3">225</div>
<div class="a cell num " style="right:330.25px;top:454.79999999999995px;height:12.5px;line-height:12.5px;color:#4d6fa3">225</div>
<div class="a cell num " style="right:289px;top:454.79999999999995px;height:12.5px;line-height:12.5px;color:#4d6fa3">225</div>
<div class="a cell num " style="right:247.75px;top:454.79999999999995px;height:12.5px;line-height:12.5px;color:#4d6fa3">225</div>
<div class="a cell num " style="right:205.89999999999998px;top:454.79999999999995px;height:12.5px;line-height:12.5px;color:#4d6fa3">225</div>
<div class="a cell num " style="right:160.25px;top:454.79999999999995px;height:12.5px;line-height:12.5px;color:#4d6fa3">225</div>
<div class="a cell num " style="right:120px;top:454.79999999999995px;height:12.5px;line-height:12.5px;color:#4d6fa3">225</div>
<div class="a cell num " style="right:78px;top:454.79999999999995px;height:12.5px;line-height:12.5px;color:#4d6fa3">225</div>
<div class="dot" style="left:104.5px;top:465.79999999999995px;width:821.5px"></div>
<div class="a cell b" style="left:108.6px;top:479.79999999999995px;height:12.5px;line-height:12.5px;color:#2f5e9a;font-size:8.0px;">Powder &amp; Shakes</div>
<div class="a cell " style="left:121.2px;top:492.29999999999995px;height:12.5px;line-height:12.5px;color:#4872ae;font-size:8.4px;">Protein Powders</div>
<div class="a cell num " style="right:669px;top:492.29999999999995px;height:12.5px;line-height:12.5px;color:#4d6fa3">400</div>
<div class="a cell num " style="right:627px;top:492.29999999999995px;height:12.5px;line-height:12.5px;color:#4d6fa3">400</div>
<div class="a cell num " style="right:586.5px;top:492.29999999999995px;height:12.5px;line-height:12.5px;color:#4d6fa3">400</div>
<div class="a cell num " style="right:544px;top:492.29999999999995px;height:12.5px;line-height:12.5px;color:#4d6fa3">400</div>
<div class="a cell num " style="right:502px;top:492.29999999999995px;height:12.5px;line-height:12.5px;color:#4d6fa3">400</div>
<div class="a cell num " style="right:460.9px;top:492.29999999999995px;height:12.5px;line-height:12.5px;color:#4d6fa3">400</div>
<div class="a cell num " style="right:418.4px;top:492.29999999999995px;height:12.5px;line-height:12.5px;color:#4d6fa3">400</div>
<div class="a cell num " style="right:377px;top:492.29999999999995px;height:12.5px;line-height:12.5px;color:#4d6fa3">400</div>
<div class="a cell num " style="right:330.25px;top:492.29999999999995px;height:12.5px;line-height:12.5px;color:#4d6fa3">400</div>
<div class="a cell num " style="right:289px;top:492.29999999999995px;height:12.5px;line-height:12.5px;color:#4d6fa3">400</div>
<div class="a cell num " style="right:247.75px;top:492.29999999999995px;height:12.5px;line-height:12.5px;color:#4d6fa3">400</div>
<div class="a cell num " style="right:205.89999999999998px;top:492.29999999999995px;height:12.5px;line-height:12.5px;color:#4d6fa3">400</div>
<div class="a cell num " style="right:160.25px;top:492.29999999999995px;height:12.5px;line-height:12.5px;color:#4d6fa3">400</div>
<div class="a cell num " style="right:120px;top:492.29999999999995px;height:12.5px;line-height:12.5px;color:#4d6fa3">400</div>
<div class="a cell num " style="right:78px;top:492.29999999999995px;height:12.5px;line-height:12.5px;color:#4d6fa3">400</div>
<div class="dot" style="left:104.5px;top:503.29999999999995px;width:821.5px"></div>
<div class="a cell " style="left:121.2px;top:504.79999999999995px;height:12.5px;line-height:12.5px;color:#4872ae;font-size:8.4px;">Protein Snacks &amp; Meals</div>
<div class="a cell num " style="right:669px;top:504.79999999999995px;height:12.5px;line-height:12.5px;color:#4d6fa3">350</div>
<div class="a cell num " style="right:627px;top:504.79999999999995px;height:12.5px;line-height:12.5px;color:#4d6fa3">350</div>
<div class="a cell num " style="right:586.5px;top:504.79999999999995px;height:12.5px;line-height:12.5px;color:#4d6fa3">350</div>
<div class="a cell num " style="right:544px;top:504.79999999999995px;height:12.5px;line-height:12.5px;color:#4d6fa3">350</div>
<div class="a cell num " style="right:502px;top:504.79999999999995px;height:12.5px;line-height:12.5px;color:#4d6fa3">350</div>
<div class="a cell num " style="right:460.9px;top:504.79999999999995px;height:12.5px;line-height:12.5px;color:#4d6fa3">350</div>
<div class="a cell num " style="right:418.4px;top:504.79999999999995px;height:12.5px;line-height:12.5px;color:#4d6fa3">350</div>
<div class="a cell num " style="right:377px;top:504.79999999999995px;height:12.5px;line-height:12.5px;color:#4d6fa3">350</div>
<div class="a cell num " style="right:330.25px;top:504.79999999999995px;height:12.5px;line-height:12.5px;color:#4d6fa3">350</div>
<div class="a cell num " style="right:289px;top:504.79999999999995px;height:12.5px;line-height:12.5px;color:#4d6fa3">350</div>
<div class="a cell num " style="right:247.75px;top:504.79999999999995px;height:12.5px;line-height:12.5px;color:#4d6fa3">350</div>
<div class="a cell num " style="right:205.89999999999998px;top:504.79999999999995px;height:12.5px;line-height:12.5px;color:#4d6fa3">350</div>
<div class="a cell num " style="right:160.25px;top:504.79999999999995px;height:12.5px;line-height:12.5px;color:#4d6fa3">350</div>
<div class="a cell num " style="right:120px;top:504.79999999999995px;height:12.5px;line-height:12.5px;color:#4d6fa3">350</div>
<div class="a cell num " style="right:78px;top:504.79999999999995px;height:12.5px;line-height:12.5px;color:#4d6fa3">350</div>
<div class="dot" style="left:104.5px;top:515.8px;width:821.5px"></div>
<div class="a cell " style="left:121.2px;top:517.3px;height:12.5px;line-height:12.5px;color:#4872ae;font-size:8.4px;">Specialty Protein Recovery Drinks</div>
<div class="a cell num " style="right:669px;top:517.3px;height:12.5px;line-height:12.5px;color:#4d6fa3">400</div>
<div class="a cell num " style="right:627px;top:517.3px;height:12.5px;line-height:12.5px;color:#4d6fa3">400</div>
<div class="a cell num " style="right:586.5px;top:517.3px;height:12.5px;line-height:12.5px;color:#4d6fa3">400</div>
<div class="a cell num " style="right:544px;top:517.3px;height:12.5px;line-height:12.5px;color:#4d6fa3">400</div>
<div class="a cell num " style="right:502px;top:517.3px;height:12.5px;line-height:12.5px;color:#4d6fa3">400</div>
<div class="a cell num " style="right:460.9px;top:517.3px;height:12.5px;line-height:12.5px;color:#4d6fa3">400</div>
<div class="a cell num " style="right:418.4px;top:517.3px;height:12.5px;line-height:12.5px;color:#4d6fa3">400</div>
<div class="a cell num " style="right:377px;top:517.3px;height:12.5px;line-height:12.5px;color:#4d6fa3">400</div>
<div class="a cell num " style="right:330.25px;top:517.3px;height:12.5px;line-height:12.5px;color:#4d6fa3">400</div>
<div class="a cell num " style="right:289px;top:517.3px;height:12.5px;line-height:12.5px;color:#4d6fa3">400</div>
<div class="a cell num " style="right:247.75px;top:517.3px;height:12.5px;line-height:12.5px;color:#4d6fa3">400</div>
<div class="a cell num " style="right:205.89999999999998px;top:517.3px;height:12.5px;line-height:12.5px;color:#4d6fa3">400</div>
<div class="a cell num " style="right:160.25px;top:517.3px;height:12.5px;line-height:12.5px;color:#4d6fa3">400</div>
<div class="a cell num " style="right:120px;top:517.3px;height:12.5px;line-height:12.5px;color:#4d6fa3">400</div>
<div class="a cell num " style="right:78px;top:517.3px;height:12.5px;line-height:12.5px;color:#4d6fa3">400</div>
<div class="dot" style="left:104.5px;top:528.3px;width:821.5px"></div>
<div class="a cell " style="left:73.3px;top:542.3px;height:12.5px;line-height:12.5px;color:#56628a;font-size:8.1px;">Cash Payments</div>
<div class="a cell num " style="right:665.4px;top:542.3px;height:12.5px;line-height:12.5px;color:#4d6fa3">(450)</div>
<div class="a cell num " style="right:623.4px;top:542.3px;height:12.5px;line-height:12.5px;color:#4d6fa3">(450)</div>
<div class="a cell num " style="right:582.9px;top:542.3px;height:12.5px;line-height:12.5px;color:#4d6fa3">(450)</div>
<div class="a cell num " style="right:540.4px;top:542.3px;height:12.5px;line-height:12.5px;color:#4d6fa3">(450)</div>
<div class="a cell num " style="right:498.4px;top:542.3px;height:12.5px;line-height:12.5px;color:#4d6fa3">(450)</div>
<div class="a cell num " style="right:457.29999999999995px;top:542.3px;height:12.5px;line-height:12.5px;color:#4d6fa3">(450)</div>
<div class="a cell num " style="right:414.79999999999995px;top:542.3px;height:12.5px;line-height:12.5px;color:#4d6fa3">(450)</div>
<div class="a cell num " style="right:373.4px;top:542.3px;height:12.5px;line-height:12.5px;color:#4d6fa3">(450)</div>
<div class="a cell num " style="right:326.65px;top:542.3px;height:12.5px;line-height:12.5px;color:#4d6fa3">(450)</div>
<div class="a cell num " style="right:285.4px;top:542.3px;height:12.5px;line-height:12.5px;color:#4d6fa3">(450)</div>
<div class="a cell num " style="right:244.14999999999998px;top:542.3px;height:12.5px;line-height:12.5px;color:#4d6fa3">(450)</div>
<div class="a cell num " style="right:202.29999999999995px;top:542.3px;height:12.5px;line-height:12.5px;color:#4d6fa3">(450)</div>
<div class="a cell num " style="right:156.64999999999998px;top:542.3px;height:12.5px;line-height:12.5px;color:#4d6fa3">(450)</div>
<div class="a cell num " style="right:116.39999999999998px;top:542.3px;height:12.5px;line-height:12.5px;color:#4d6fa3">(450)</div>
<div class="a cell num " style="right:74.39999999999998px;top:542.3px;height:12.5px;line-height:12.5px;color:#4d6fa3">(450)</div>
<div class="a cell num " style="right:28.399999999999977px;top:542.3px;height:12.5px;line-height:12.5px;color:#4d6fa3">(5,400)</div>
<svg style="left:0;top:0" width="1000" height="591" viewBox="0 0 1000 591"><path d="M926.3 541.2 H930.8 L926.3 545 Z" fill="#3a3a3a"/></svg>
<div class="a cell " style="left:73.3px;top:555.6999999999999px;height:12.5px;line-height:12.5px;color:#4e6290;font-size:8.1px;">Loan Repayments</div>
<div class="a cell num " style="right:665.4px;top:555.6999999999999px;height:12.5px;line-height:12.5px;color:#4d6fa3">(6,955)</div>
<div class="a cell num " style="right:623.4px;top:555.6999999999999px;height:12.5px;line-height:12.5px;color:#4d6fa3">(6,955)</div>
<div class="a cell num " style="right:582.9px;top:555.6999999999999px;height:12.5px;line-height:12.5px;color:#4d6fa3">(6,955)</div>
<div class="a cell num " style="right:540.4px;top:555.6999999999999px;height:12.5px;line-height:12.5px;color:#4d6fa3">(6,955)</div>
<div class="a cell num " style="right:498.4px;top:555.6999999999999px;height:12.5px;line-height:12.5px;color:#4d6fa3">(6,955)</div>
<div class="a cell num " style="right:457.29999999999995px;top:555.6999999999999px;height:12.5px;line-height:12.5px;color:#4d6fa3">(6,955)</div>
<div class="a cell num " style="right:414.79999999999995px;top:555.6999999999999px;height:12.5px;line-height:12.5px;color:#4d6fa3">(6,955)</div>
<div class="a cell num " style="right:373.4px;top:555.6999999999999px;height:12.5px;line-height:12.5px;color:#4d6fa3">(6,955)</div>
<div class="a cell num " style="right:326.65px;top:555.6999999999999px;height:12.5px;line-height:12.5px;color:#4d6fa3">(6,955)</div>
<div class="a cell num " style="right:285.4px;top:555.6999999999999px;height:12.5px;line-height:12.5px;color:#4d6fa3">(6,955)</div>
<div class="a cell num " style="right:244.14999999999998px;top:555.6999999999999px;height:12.5px;line-height:12.5px;color:#4d6fa3">(6,955)</div>
<div class="a cell num " style="right:202.29999999999995px;top:555.6999999999999px;height:12.5px;line-height:12.5px;color:#4d6fa3">(6,955)</div>
<div class="a cell num " style="right:156.64999999999998px;top:555.6999999999999px;height:12.5px;line-height:12.5px;color:#4d6fa3">(6,955)</div>
<div class="a cell num " style="right:116.39999999999998px;top:555.6999999999999px;height:12.5px;line-height:12.5px;color:#4d6fa3">(6,955)</div>
<div class="a cell num " style="right:74.39999999999998px;top:555.6999999999999px;height:12.5px;line-height:12.5px;color:#4d6fa3">(6,955)</div>
<div class="a cell num " style="right:28.399999999999977px;top:555.6999999999999px;height:12.5px;line-height:12.5px;color:#4d6fa3">(83,460)</div>
<div class="a" style="left:987px;top:51px;width:13px;height:508px;background:#f1f1f1;border-left:1px solid #dedede"></div>
<div class="a" style="left:991px;top:62px;width:6px;height:233.7px;background:#717171;border-radius:3px"></div>
<svg style="left:0;top:0" width="1000" height="591" viewBox="0 0 1000 591"><path d="M991.3 58.8 L994 55.3 L996.7 58.8 Z" fill="#6a6a6a"/><path d="M991.3 552.5 L994 556 L996.7 552.5 Z" fill="#6a6a6a"/></svg>
<div id="tabs"></div>
<div class="tab" style="left:72px;width:44px;">How To</div>
<div class="tab y" style="left:122px;width:70px;">2025 Accounts</div>
<div class="tab" style="left:198px;width:100px;">2025 MRR Dashboard</div>
<div class="tab y" style="left:304.3px;width:42.89999999999998px;">IS 2025</div>
<div class="tab" style="left:351.4px;width:43.200000000000045px;background:#f7f7f5;font-weight:bold;font-size:8.5px;line-height:18px;color:#222;">CF 2025</div>
<div class="tab" style="left:400px;width:44px;">BS 2025</div>
<div class="tab y" style="left:448.8px;width:61.099999999999966px;">CAPEX 2025</div>
<div class="tab y" style="left:515.5px;width:57.10000000000002px;">OPEX 2025</div>
<div class="tab" style="left:578px;width:120px;">Statements Summary 2025</div>
<div class="tab" style="left:704px;width:86px;">PAYG 2025 Charts</div>
<div class="tab y" style="left:794.4px;width:71.39999999999998px;">2026 Accounts</div>
<div class="a" style="left:356px;top:573.3px;width:33px;height:1.3px;background:#2f8a52"></div>
<svg style="left:0;top:0" width="1000" height="591" viewBox="0 0 1000 591">
<path d="M20 565.5 L17.5 568.3 L20 571" fill="none" stroke="#b8b8b8" stroke-width="1"/>
<path d="M38.8 565.5 L41.3 568.3 L38.8 571" fill="none" stroke="#555" stroke-width="1"/>
<path d="M887 568.3 H894.5" stroke="#444" stroke-width="1.2" stroke-dasharray="1.5 1"/>
<path d="M877 571 L880 566" stroke="#9ab" stroke-width="0.8"/>
<path d="M907 568.3 H915.5 M911.2 564 V572.6" stroke="#444" stroke-width="1"/>
<circle cx="932" cy="565.3" r="0.7" fill="#555"/><circle cx="932" cy="568.3" r="0.7" fill="#555"/><circle cx="932" cy="571.3" r="0.7" fill="#555"/>
<path d="M951 565.5 L946.5 568.3 L951 571 Z" fill="#555"/>
<rect x="953.5" y="565.4" width="22.5" height="5.8" rx="2.9" fill="#6f6f6f"/>
<path d="M980.5 565.5 L985 568.3 L980.5 571 Z" fill="#555"/>
</svg>
<div id="status"></div>
<div class="a" style="left:7.7px;top:581.5px;font-size:6.3px;line-height:9px;color:#444">Ready</div>
<div class="a" style="left:72px;top:581.5px;font-size:6.6px;line-height:9px;color:#1e1e1e;font-weight:bold">Accessibility: Investigate</div>
<div class="a" style="left:978.3px;top:581.8px;font-size:6.4px;line-height:9px;color:#444">100%</div>
<svg style="left:0;top:0" width="1000" height="591" viewBox="0 0 1000 591">
<rect x="40" y="582" width="9.5" height="9" fill="#5a5a5a"/>
<rect x="41.5" y="584.5" width="6.5" height="5.5" fill="#d8d8d8"/>
<path d="M42.5 585.5 H44.5 M42.5 587.5 H44" stroke="#555" stroke-width="0.8"/>
<circle cx="46.3" cy="588.3" r="1.2" fill="#222"/>
<circle cx="64.6" cy="582.9" r="1.1" fill="#444"/><path d="M60.8 585 H68.4 M64.6 585 V588 L62.3 591 M64.6 588 L66.9 591" fill="none" stroke="#444" stroke-width="1"/>
<rect x="801" y="579" width="30" height="12" fill="#e2e2e2"/>
<g fill="none" stroke="#555" stroke-width="0.9">
<rect x="814.5" y="582.5" width="9" height="8.5"/>
<path d="M817.5 582.5 V591 M820.5 582.5 V591 M814.5 585.3 H823.5 M814.5 588.2 H823.5"/>
<rect x="840.5" y="582.5" width="9" height="8.5"/>
<path d="M843.5 582.5 V591 M846.5 582.5 V591"/>
<rect x="866.5" y="582.5" width="9.5" height="8.5"/>
<path d="M869 582.5 V586.5 H873.5 V582.5"/>
</g>
<path d="M888 587 H893.5" stroke="#555" stroke-width="0.9"/>
<path d="M896.5 587.3 H967.5" stroke="#9a9a9a" stroke-width="0.9"/>
<rect x="927.3" y="583.5" width="2.6" height="7" fill="#444"/>
<path d="M964.5 587.3 H969 M966.8 585 V589.6" stroke="#555" stroke-width="0.8"/>
</svg>
</body></html>
